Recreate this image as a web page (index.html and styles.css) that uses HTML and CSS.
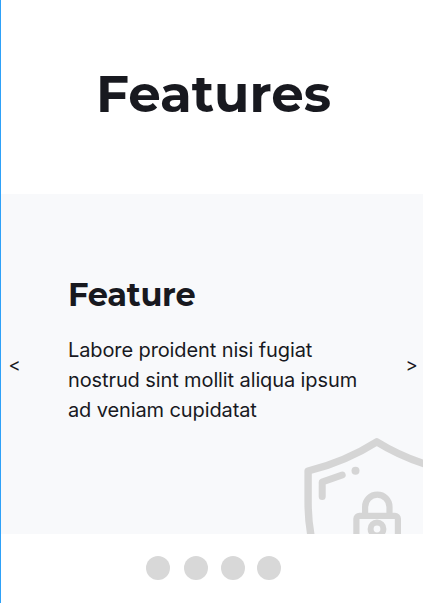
FILE: index.html
```html
<!DOCTYPE html>
<html lang="en">
<head>
<meta charset="utf-8">
<title>Features</title>
<link rel="stylesheet" href="styles.css">
</head>
<body>
<main class="features">
  <header class="header"><h1 class="title">Features</h1></header>
  <section class="slide">
    <button class="arrow" aria-label="Previous">&lt;</button>
    <div class="content">
      <h2 class="name">Feature</h2>
      <p class="text">Labore proident nisi fugiat<br>nostrud sint mollit aliqua ipsum<br>ad veniam cupidatat</p>
    </div>
    <button class="arrow next" aria-label="Next">&gt;</button>
    <svg class="shield" viewBox="297 430 126 104" width="126" height="104" fill="none" stroke="#d5d5d5" stroke-linejoin="round">
      <path stroke-width="7.4" d="M450 471C424 465 398 455 376.8 441.8C356 455 332 465 308.1 471V502C308.1 516 309 526 311.5 538"/>
      <path stroke-width="7" stroke-linecap="round" d="M322.2 496.5V482L342.2 475"/>
      <circle cx="355.5" cy="470.7" r="4" fill="#d5d5d5" stroke="none"/>
      <path stroke-width="6.2" d="M365.1 515V506.9a12.2 12.2 0 0 1 24.4 0V515"/>
      <rect stroke-width="6.2" x="356.4" y="515.8" width="41.5" height="34" rx="3"/>
      <circle stroke-width="6" cx="377" cy="529" r="6.4"/>
    </svg>
  </section>
  <nav class="dots">
    <span class="dot"></span><span class="dot"></span><span class="dot"></span><span class="dot"></span>
  </nav>
</main>
</body>
</html>
```
FILE: styles.css
```css
* { box-sizing: border-box; }
body {
  margin: 0;
  background: #fff;
  color: #18191f;
  font-family: Inter, "Liberation Sans", sans-serif;
}
.features {
  height: 603px;
  border-left: 1px solid #2ea1f8;
  overflow: hidden;
}
.header {
  height: 194px;
  padding: 62px 0 0 95px;
}
.title {
  margin: 0;
  font-family: Montserrat, Inter, sans-serif;
  font-size: 51.5px;
  line-height: 64px;
  font-weight: 700;
  white-space: nowrap;
}
.slide {
  position: relative;
  display: flex;
  height: 340px;
  background: #f8f9fb;
  overflow: hidden;
}
.arrow {
  width: 27px;
  padding: 2px 0 0;
  border: 0;
  background: none;
  color: inherit;
  font: 400 18.5px/30px Inter, sans-serif;
}
.next {
  width: 23px;
}
.content {
  flex: 1;
  padding: 81px 0 0 40px;
  white-space: nowrap;
}
.name {
  margin: 0 0 20px;
  font-family: Montserrat, Inter, sans-serif;
  font-size: 32px;
  line-height: 40px;
  font-weight: 700;
  letter-spacing: -0.25px;
}
.text {
  margin: 0;
  font-size: 20px;
  line-height: 30px;
  letter-spacing: -0.11px;
}
.shield {
  position: absolute;
  right: 0;
  bottom: 0;
}
.dots {
  display: flex;
  gap: 13.5px;
  padding: 22px 0 0 145px;
}
.dot {
  width: 24px;
  height: 24px;
  border-radius: 50%;
  background: #d8d8d8;
}
.dot:last-child { margin-left: -1.5px; }
```
